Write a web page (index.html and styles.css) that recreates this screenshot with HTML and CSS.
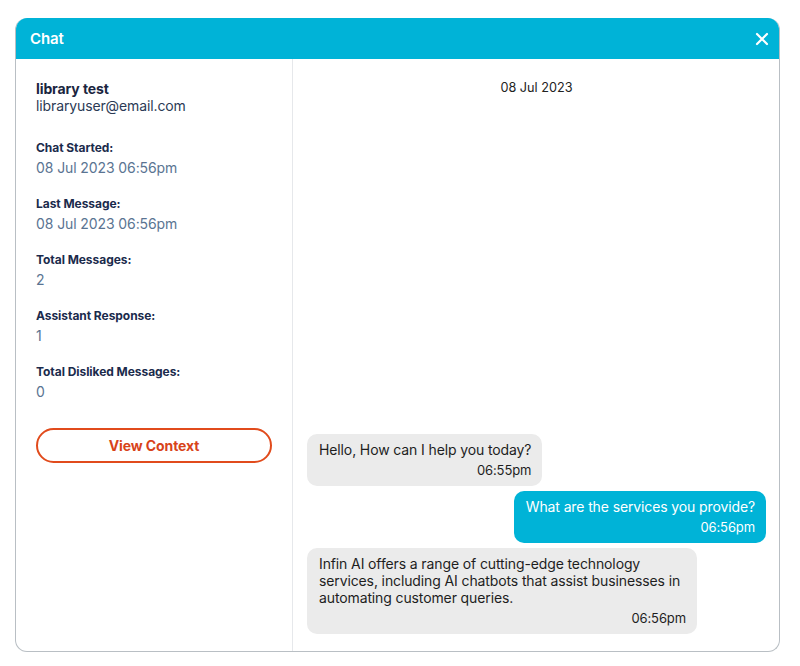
FILE: index.html
```html
<!DOCTYPE html>
<html>
<head>
<meta charset="utf-8">
<link rel="stylesheet" href="styles.css">
</head>
<body>
<div class="modal">
  <div class="modal-header">
    <span class="title">Chat</span>
    <svg class="close" width="14" height="14" viewBox="0 0 14 14"><path d="M2 2 L12 12 M12 2 L2 12" stroke="#fff" stroke-width="2.2" stroke-linecap="round"/></svg>
  </div>
  <div class="modal-body">
    <aside class="info">
      <div class="name">library test</div>
      <div class="email">libraryuser@email.com</div>
      <div class="fields">
        <div class="field"><div class="label">Chat Started:</div><div class="value">08 Jul 2023 06:56pm</div></div>
        <div class="field"><div class="label">Last Message:</div><div class="value">08 Jul 2023 06:56pm</div></div>
        <div class="field"><div class="label">Total Messages:</div><div class="value">2</div></div>
        <div class="field"><div class="label">Assistant Response:</div><div class="value">1</div></div>
        <div class="field"><div class="label">Total Disliked Messages:</div><div class="value">0</div></div>
      </div>
      <button class="context-btn">View Context</button>
    </aside>
    <section class="chat">
      <div class="date">08 Jul 2023</div>
      <div class="messages">
        <div class="bubble bot">
          <div class="text">Hello, How can I help you today?</div>
          <div class="time">06:55pm</div>
        </div>
        <div class="bubble user">
          <div class="text">What are the services you provide?</div>
          <div class="time">06:56pm</div>
        </div>
        <div class="bubble bot wide">
          <div class="text">Infin AI offers a range of cutting-edge technology services, including AI chatbots that assist businesses in automating customer queries.</div>
          <div class="time">06:56pm</div>
        </div>
      </div>
    </section>
  </div>
</div>
</body>
</html>
```
FILE: styles.css
```css
* { box-sizing: border-box; }
html, body { margin: 0; background: #fff; }
body {
  padding: 18px 20px 0 15px;
  font-family: Inter, "Noto Sans", sans-serif;
}
.modal {
  width: 765px;
  height: 634px;
  border: 1px solid #b9bfc4;
  border-top: none;
  border-radius: 12px;
  overflow: hidden;
  display: flex;
  flex-direction: column;
}
.modal-header {
  height: 41px;
  background: #00b3d7;
  display: flex;
  align-items: center;
  justify-content: space-between;
  padding: 0 10px 0 14px;
  flex-shrink: 0;
}
.title {
  color: #fff;
  font-size: 15px;
  font-weight: 600;
  letter-spacing: -0.1px;
}
.close { display: block; }
.modal-body {
  flex: 1;
  display: flex;
  min-height: 0;
}
.info {
  width: 277px;
  border-right: 1px solid #e6e8eb;
  padding: 21px 20px 0 20px;
  flex-shrink: 0;
}
.name {
  font-size: 14px;
  line-height: 17px;
  font-weight: 700;
  color: #1a2540;
  letter-spacing: -0.1px;
}
.email {
  font-size: 14px;
  line-height: 17px;
  color: #2b3a55;
  letter-spacing: -0.12px;
}
.fields {
  margin-top: 26px;
  display: flex;
  flex-direction: column;
  gap: 20px;
}
.field {
  display: flex;
  flex-direction: column;
  gap: 4px;
}
.label {
  font-size: 12px;
  line-height: 15px;
  font-weight: 700;
  color: #1b2b4c;
  letter-spacing: -0.05px;
}
.value {
  font-size: 14px;
  line-height: 17px;
  color: #5a7492;
  letter-spacing: -0.1px;
}
.context-btn {
  margin-top: 28px;
  width: 236px;
  height: 35px;
  border: 2px solid #e14b1c;
  border-radius: 18px;
  background: #fff;
  color: #d8431a;
  font-family: Inter, "Noto Sans", sans-serif;
  font-size: 14px;
  font-weight: 700;
  letter-spacing: -0.1px;
  cursor: pointer;
}
.chat {
  flex: 1;
  display: flex;
  flex-direction: column;
  padding: 21px 13px 17px 14px;
}
.date {
  text-align: center;
  font-size: 12.7px;
  line-height: 16px;
  color: #222;
}
.messages {
  flex: 1;
  display: flex;
  flex-direction: column;
  justify-content: flex-end;
  gap: 5px;
}
.bubble {
  padding: 7px 11px 7px 12px;
  border-radius: 10px;
  max-width: 392px;
}
.bubble .text {
  font-size: 14px;
  line-height: 17px;
  letter-spacing: -0.12px;
}
.bubble .time {
  margin-top: 4px;
  font-size: 13px;
  line-height: 17px;
  text-align: right;
  letter-spacing: -0.1px;
}
.bot {
  align-self: flex-start;
  background: #ebebeb;
  color: #1e1e1e;
}
.user {
  align-self: flex-end;
  background: #00b3d7;
  color: #fff;
}
.wide { width: 390px; }
```
